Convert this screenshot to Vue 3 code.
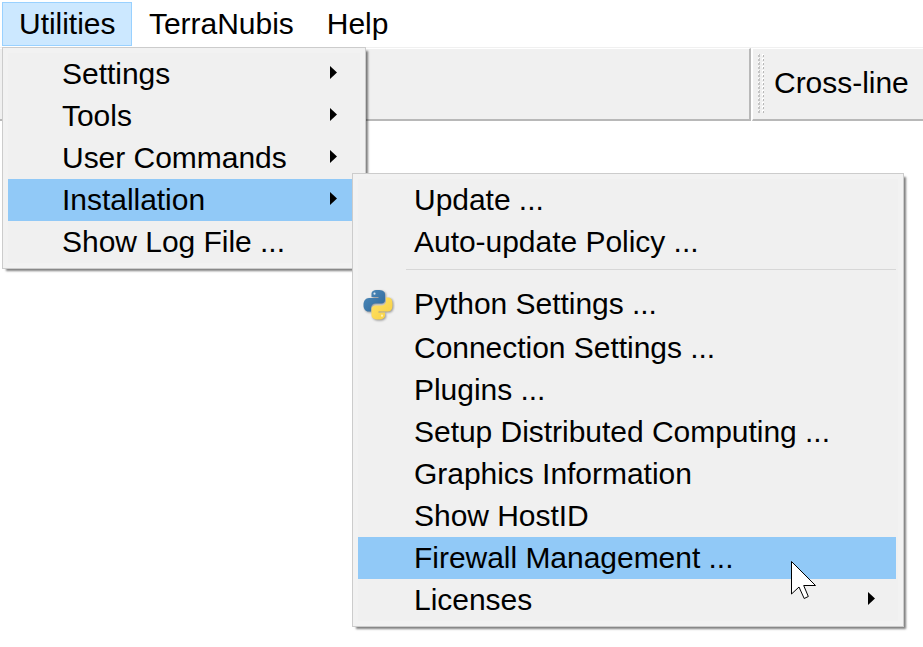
<script setup>
const toolsMenu = [
  { label: 'Settings', sub: true },
  { label: 'Tools', sub: true },
  { label: 'User Commands', sub: true },
  { label: 'Installation', sub: true, active: true },
  { label: 'Show Log File ...' },
]
const installMenu = [
  { label: 'Update ...' },
  { label: 'Auto-update Policy ...' },
  { separator: true },
  { label: 'Python Settings ...', icon: true },
  { label: 'Connection Settings ...' },
  { label: 'Plugins ...' },
  { label: 'Setup Distributed Computing ...' },
  { label: 'Graphics Information' },
  { label: 'Show HostID' },
  { label: 'Firewall Management ...', active: true },
  { label: 'Licenses', sub: true },
]
</script>

<template>
  <div class="window">
    <nav class="menubar">
      <span class="top open">Utilities</span>
      <span class="top">TerraNubis</span>
      <span class="top">Help</span>
    </nav>
    <div class="toolbars">
      <div class="bar first"></div>
      <div class="bar second">
        <svg class="grip" width="7" height="60" viewBox="0 0 7 60" shape-rendering="crispEdges">
          <template v-for="n in 15" :key="n">
            <rect x="0" :y="n * 4 - 4" width="2" height="2" fill="#fff" />
            <rect x="0" :y="n * 4 - 3" width="2" height="2" fill="#c4c4c4" />
            <rect x="1" :y="n * 4 - 4" width="1" height="1" fill="#c4c4c4" />
            <rect x="4" :y="n * 4 - 4" width="2" height="2" fill="#fff" />
            <rect x="5" :y="n * 4 - 3" width="1" height="2" fill="#b8b8b8" />
          </template>
        </svg>
        <span>Cross-line</span>
      </div>
    </div>

    <div class="menu main-menu">
      <div v-for="item in toolsMenu" :key="item.label" class="item" :class="{ active: item.active }">
        <span class="label">{{ item.label }}</span>
        <svg v-if="item.sub" class="arrow" width="7" height="13" viewBox="0 0 7 13"><path d="M0 0L7 6.500L0 13Z" /></svg>
      </div>
    </div>

    <div class="menu sub-menu">
      <template v-for="(item, i) in installMenu" :key="i">
        <div v-if="item.separator" class="separator"></div>
        <div v-else class="item" :class="{ active: item.active, tall: item.icon }">
          <svg v-if="item.icon" class="python" width="32" height="34" viewBox="0 0 32 34">
            <defs>
              <linearGradient id="pyBlue" x1="0" y1="0" x2="1" y2="1">
                <stop offset="0" stop-color="#4f8dbd" /><stop offset="1" stop-color="#2e6699" />
              </linearGradient>
              <linearGradient id="pyYellow" x1="0" y1="0" x2="1" y2="1">
                <stop offset="0" stop-color="#ffe268" /><stop offset="1" stop-color="#f8d040" />
              </linearGradient>
            </defs>
            <g class="logo">
              <path fill="url(#pyBlue)" d="M14.500 1C9.700 1 8.500 3 8.500 5V8H15.500V9H6C2.500 9 .5 12 .5 16C.5 20 2.500 22.500 5.500 22.500H8V19C8 16.500 10 14.500 12.500 14.500H18.500C20.700 14.500 22 13 22 11V5C22 2.500 19.500 1 14.500 1Z" />
              <path fill="url(#pyYellow)" d="M15.500 30.500C20.300 30.500 22 28.500 22 26.500V23.500H15.500V22.500H25C28.500 22.500 29.500 19.500 29.500 15.500C29.500 11.500 28.500 8.500 25.500 8.500H23V12C23 14.500 21 16.500 18.500 16.500H12.500C10.300 16.500 8.500 18 8.500 20V26C8.500 28.500 10.500 30.500 15.500 30.500Z" />
              <circle cx="11.500" cy="4.700" r="1.100" fill="#dbe8f2" />
              <circle cx="19" cy="26.700" r="1.100" fill="#fff4b8" />
            </g>
          </svg>
          <span class="label">{{ item.label }}</span>
          <svg v-if="item.sub" class="arrow" width="7" height="13" viewBox="0 0 7 13"><path d="M0 0L7 6.500L0 13Z" /></svg>
        </div>
      </template>
    </div>

    <svg class="cursor" width="26" height="40" viewBox="0 0 26 40">
      <path d="M.500.500V33L8 26L13.200 37.500L17.300 35.500L12.700 24.500H24.500Z" fill="#fff" stroke="#000" />
    </svg>
  </div>
</template>

<style>
body { background: #fff; }
</style>

<style scoped>
.window {
  position: relative;
  width: 923px;
  height: 647px;
  overflow: hidden;
  box-sizing: border-box;
  background: #fff;
  color: #000;
  font: 30px/42px "Liberation Sans", Arial, sans-serif;
  letter-spacing: -.03px;
  white-space: nowrap;
}
.menubar { display: flex; height: 47px; padding: 2px 0 0 2px; box-sizing: border-box; }
.top { height: 44px; padding: 0 15px 0 16px; box-sizing: border-box; border: 1px solid transparent; }
.open { width: 130px; background: #cce8ff; border-color: #99d1ff; }
.toolbars { display: flex; height: 74px; box-sizing: border-box; border-top: 1px solid #f0f0f0; }
.bar { box-sizing: border-box; background: #f0f0f0; border-top: 1px solid #fff; border-bottom: 2px solid #b8b8b8; }
.first { width: 751px; border-right: 2px solid #b8b8b8; }
.second { flex: 1; margin-left: 1px; border-left: 1px solid #fff; display: flex; align-items: flex-start; padding: 5px 0 0 5px; }
.second span { margin: 8px 0 0 9px; }
.grip { flex: none; }
.menu {
  position: absolute;
  box-sizing: border-box;
  border: 1px solid #ccc;
  background: #f0f0f0;
  padding: 5px 7px 5px 5px;
  box-shadow: inset 0 0 0 5px #f2f2f2, 3px 3px 2px -1px rgba(0, 0, 0, .5);
}
.main-menu { left: 2px; top: 47px; width: 364px; height: 222px; }
.sub-menu { left: 352px; top: 173px; width: 552px; height: 454px; }
.item { position: relative; display: flex; align-items: center; height: 42px; padding: 0 21px 0 54px; }
.sub-menu .item { padding-left: 56px; }
.item.tall { height: 44px; align-items: flex-start; }
.active { background: #91c9f7; }
.label { flex: 1; }
.arrow { flex: none; margin-top: -3px; }
.separator { height: 20px; margin-left: 48px; box-sizing: border-box; padding-top: 6px; }
.separator::before { content: ""; display: block; height: 1px; background: #d7d7d7; }
.python { position: absolute; left: 5px; top: 6px; }
.logo { filter: drop-shadow(1px 1px 1px rgba(0, 0, 0, .4)); }
.cursor { position: absolute; left: 791px; top: 561px; }
</style>
